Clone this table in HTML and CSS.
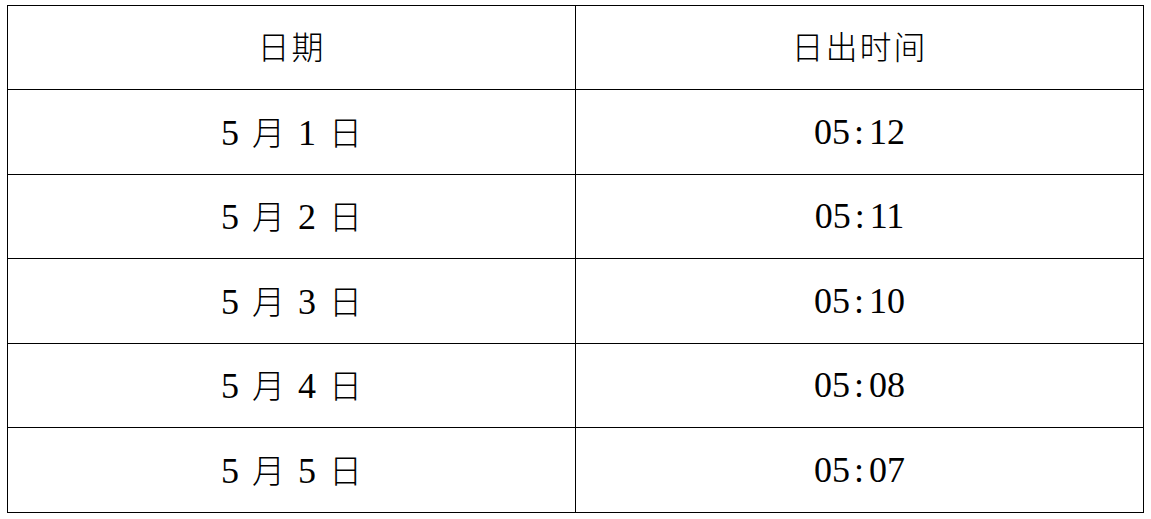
FILE: index.html
```html
<!DOCTYPE html>
<html lang="zh-CN">
<head>
<meta charset="utf-8">
<title>日出时间</title>
<link rel="stylesheet" href="styles.css">
</head>
<body>
<div class="table">
  <div class="cell head">日期</div>
  <div class="cell head">日出时间</div>
  <div class="cell"><span class="date"><span class="d">5</span><span class="c">月</span><span class="d">1</span><span class="c">日</span></span></div>
  <div class="cell">05<span class="colon">:</span>12</div>
  <div class="cell"><span class="date"><span class="d">5</span><span class="c">月</span><span class="d">2</span><span class="c">日</span></span></div>
  <div class="cell">05<span class="colon">:</span>11</div>
  <div class="cell"><span class="date"><span class="d">5</span><span class="c">月</span><span class="d">3</span><span class="c">日</span></span></div>
  <div class="cell">05<span class="colon">:</span>10</div>
  <div class="cell"><span class="date"><span class="d">5</span><span class="c">月</span><span class="d">4</span><span class="c">日</span></span></div>
  <div class="cell">05<span class="colon">:</span>08</div>
  <div class="cell"><span class="date"><span class="d">5</span><span class="c">月</span><span class="d">5</span><span class="c">日</span></span></div>
  <div class="cell">05<span class="colon">:</span>07</div>
</div>
</body>
</html>
```
FILE: styles.css
```css
html, body {
  background: #fff;
}
body {
  margin: 5px 0 0 7px;
  font-family: "Liberation Serif", "Noto Sans CJK SC", serif;
  color: #000;
}
.table {
  width: 1137px;
  display: grid;
  grid-template-columns: 1fr 1fr;
  grid-template-rows: 84px 85px 84px 85px 84px 85px;
  border-top: 1px solid #000;
  border-left: 1px solid #000;
  box-sizing: border-box;
}
.cell {
  border-right: 1px solid #000;
  border-bottom: 1px solid #000;
  display: flex;
  align-items: center;
  justify-content: center;
  font-size: 36px;
  white-space: pre;
  padding-bottom: 1px;
}
.head {
  font-size: 32px;
  letter-spacing: 2px;
  font-weight: 300;
  padding-bottom: 6px;
}
.date {
  display: inline-flex;
  align-items: baseline;
  gap: 13px;
  line-height: 40px;
}
.c {
  font-family: "Noto Sans CJK SC", sans-serif;
  font-size: 33px;
  font-weight: 300;
}
.colon {
  padding: 0 5px 0 4px;
}
```
